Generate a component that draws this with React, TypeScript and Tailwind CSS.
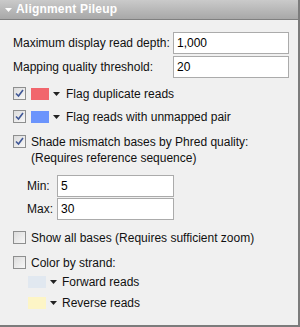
import React from "react";

function Check({ checked }: { checked?: boolean }) {
  return (
    <span className="inline-flex h-[13px] w-[13px] shrink-0 items-center justify-center border border-[#8e8f8f] bg-gradient-to-br from-[#dcdcdc] to-[#f7f7f7]">
      {checked && (
        <svg width="9" height="9" viewBox="0 0 9 9">
          <path d="M1 4.5 L3.5 7 L8 1" fill="none" stroke="#3f5796" strokeWidth="1.6" />
        </svg>
      )}
    </span>
  );
}

function Arrow() {
  return (
    <svg width="7" height="4" viewBox="0 0 7 4" className="shrink-0">
      <path d="M0 0 H7 L3.5 4 Z" fill="#222" />
    </svg>
  );
}

function Field({ value, w }: { value: string; w: string }) {
  return (
    <div className={`flex h-[22px] shrink-0 items-center border border-[#ababab] bg-white px-[3px] text-black ${w}`}>
      {value}
    </div>
  );
}

export default function App() {
  return (
    <div
      className="flex h-[327px] w-[300px] flex-col overflow-hidden border-r-2 border-b-2 border-[#7c7c7c] bg-[#f0f0f0] text-[12px] leading-[14px] whitespace-nowrap text-[#111]"
      style={{ fontFamily: '"Liberation Sans", Arial, sans-serif' }}
    >
      {/* Header */}
      <div className="flex h-[20px] shrink-0 items-center gap-[4px] border-b border-[#808080] bg-gradient-to-b from-[#cacaca] to-[#a8a8a8] pl-[5px]">
        <svg width="7" height="4" viewBox="0 0 7 4">
          <path d="M0 0 H7 L3.5 4 Z" fill="#fff" />
        </svg>
        <span className="text-[12px] font-bold leading-[19px] tracking-[0.2px] text-white">Alignment Pileup</span>
      </div>

      <div className="flex flex-col pl-[13px] pr-[9px] pt-[12px]">
        <div className="flex h-[22px] items-center justify-between">
          <span>Maximum display read depth:</span>
          <Field value="1,000" w="w-[116px]" />
        </div>
        <div className="mt-[2px] flex h-[22px] items-center justify-between">
          <span>Mapping quality threshold:</span>
          <Field value="20" w="w-[116px]" />
        </div>

        <div className="mt-[9px] flex h-[13px] items-center">
          <Check checked />
          <span className="ml-[5px] h-[12px] w-[18px] bg-[#f1666d]" />
          <span className="ml-[4px]"><Arrow /></span>
          <span className="ml-[6px]">Flag duplicate reads</span>
        </div>
        <div className="mt-[10px] flex h-[13px] items-center">
          <Check checked />
          <span className="ml-[5px] h-[12px] w-[18px] bg-[#6b94fc]" />
          <span className="ml-[4px]"><Arrow /></span>
          <span className="ml-[6px]">Flag reads with unmapped pair</span>
        </div>

        <div className="mt-[12px] flex h-[13px] items-center">
          <Check checked />
          <span className="ml-[5px]">Shade mismatch bases by Phred quality:</span>
        </div>
        <div className="mt-[3px] h-[14px] pl-[18px]">(Requires reference sequence)</div>

        <div className="mt-[10px] flex flex-col gap-[1px] pl-[14px]">
          <div className="flex h-[22px] items-center">
            <span className="w-[30px]">Min:</span>
            <Field value="5" w="w-[117px]" />
          </div>
          <div className="flex h-[22px] items-center">
            <span className="w-[30px]">Max:</span>
            <Field value="30" w="w-[117px]" />
          </div>
        </div>

        <div className="mt-[11px] flex h-[13px] items-center">
          <Check />
          <span className="ml-[5px]">Show all bases (Requires sufficient zoom)</span>
        </div>
        <div className="mt-[12px] flex h-[13px] items-center">
          <Check />
          <span className="ml-[5px]">Color by strand:</span>
        </div>
        <div className="mt-[7px] flex h-[12px] items-center pl-[15px]">
          <span className="h-[12px] w-[18px] bg-[#e1e8f0]" />
          <span className="ml-[4px]"><Arrow /></span>
          <span className="ml-[5px]">Forward reads</span>
        </div>
        <div className="mt-[9px] flex h-[12px] items-center pl-[15px]">
          <span className="h-[12px] w-[18px] bg-[#fdf5c6]" />
          <span className="ml-[4px]"><Arrow /></span>
          <span className="ml-[5px]">Reverse reads</span>
        </div>
      </div>
    </div>
  );
}
